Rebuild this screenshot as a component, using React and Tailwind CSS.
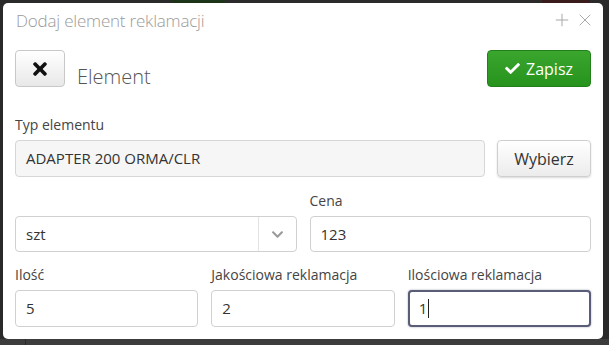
import React from "react";
import { FaCheck, FaTimes, FaChevronDown } from "react-icons/fa";
import { Plus, X } from "lucide-react";

const font = { fontFamily: '"Open Sans", "Noto Sans", sans-serif' };

function Label({ children }) {
  return <div className="text-[14px] leading-[20px] text-[#444] h-[20px]">{children}</div>;
}

export default function App() {
  return (
    <div style={font} className="w-[609px] h-[345px] bg-[#2a2a2a] flex flex-col overflow-hidden">
      <div className="h-[3px] flex shrink-0">
        <div className="w-[171px]" />
        <div className="w-[54px] bg-[#1d3318]" />
        <div className="w-[317px]" />
        <div className="w-[48px] bg-[#3a1b1b]" />
      </div>
      <div className="flex flex-1">
        <div className="w-[3px] shrink-0" />
        <div className="w-[600px] h-[336px] bg-white rounded-[5px] flex flex-col px-[12px]">
          <div className="h-[42px] flex items-start justify-between pl-[1px] pt-[6px]">
            <div className="text-[17px] leading-[24px] font-light text-[#9a9a9a] tracking-[-0.2px]">Dodaj element reklamacji</div>
            <div className="flex items-center gap-[3px] text-[#a8a8a8] h-[24px] mt-[-1px] mr-[-4px]">
              <Plus className="w-[20px] h-[20px]" strokeWidth={1.2} />
              <X className="w-[20px] h-[20px]" strokeWidth={1.2} />
            </div>
          </div>
          <div className="h-[40px] mt-[5px] flex items-start justify-between">
            <div className="flex items-end">
              <button className="w-[50px] h-[37px] rounded-[4px] border border-[#c8c8c8] bg-gradient-to-b from-white to-[#e8e8e8] flex items-center justify-center text-[#111]">
                <FaTimes className="w-[20px] h-[20px]" />
              </button>
              <div className="ml-[12px] text-[20px] font-light text-[#555] leading-none">Element</div>
            </div>
            <button className="w-[104px] h-[37px] rounded-[4px] border border-[#22801a] bg-gradient-to-b from-[#3aa62e] to-[#26931c] flex items-center justify-center gap-[6px] text-white text-[16px]">
              <FaCheck className="w-[15px] h-[15px]" />
              <span>Zapisz</span>
            </button>
          </div>
          <div className="mt-[25px]">
            <Label>Typ elementu</Label>
          </div>
          <div className="mt-[5px] flex gap-[12px]">
            <div className="flex-1 h-[37px] rounded-[4px] border border-[#d6d6d6] bg-[#f6f6f6] flex items-center px-[10px] text-[15px] text-[#333]">
              ADAPTER 200 ORMA/CLR
            </div>
            <button className="w-[94px] h-[37px] rounded-[4px] border border-[#cfcfcf] bg-gradient-to-b from-white to-[#ececec] shadow-[0_1px_2px_rgba(0,0,0,0.15)] text-[16px] text-[#333]">
              Wybierz
            </button>
          </div>
          <div className="mt-[14px] grid grid-cols-2 gap-x-[13px]">
            <div className="flex flex-col">
              <div className="h-[20px]" />
              <div className="mt-[5px] h-[36px] rounded-[4px] border border-[#d0d0d0] bg-white flex items-center text-[15px] text-[#333]">
                <div className="flex-1 px-[10px]">szt</div>
                <div className="w-[38px] h-full border-l border-[#e2e2e2] flex items-center justify-center text-[#9a9a9a]">
                  <FaChevronDown className="w-[13px] h-[13px]" />
                </div>
              </div>
            </div>
            <div className="flex flex-col">
              <Label>Cena</Label>
              <div className="mt-[5px] h-[36px] rounded-[4px] border border-[#d0d0d0] bg-white flex items-center px-[10px] text-[15px] text-[#333]">
                123
              </div>
            </div>
          </div>
          <div className="mt-[13px] grid grid-cols-3 gap-x-[13px]">
            <div className="flex flex-col">
              <Label>Ilość</Label>
              <div className="mt-[5px] h-[37px] rounded-[4px] border border-[#d0d0d0] bg-white flex items-center px-[10px] text-[15px] text-[#333]">
                5
              </div>
            </div>
            <div className="flex flex-col">
              <Label>Jakościowa reklamacja</Label>
              <div className="mt-[5px] h-[37px] rounded-[4px] border border-[#d0d0d0] bg-white flex items-center px-[10px] text-[15px] text-[#333]">
                2
              </div>
            </div>
            <div className="flex flex-col">
              <Label>Ilościowa reklamacja</Label>
              <div className="mt-[5px] h-[37px] rounded-[4px] border-2 border-[#5a5d78] shadow-[0_0_2px_rgba(90,93,120,0.6)] bg-white flex items-center px-[9px] text-[15px] text-[#333]">
                1<span className="w-[1px] h-[19px] bg-[#222] ml-[1px]" />
              </div>
            </div>
          </div>
        </div>
        <div className="flex-1" />
      </div>
      <div className="h-[6px] shrink-0 bg-[#3c3c3c] flex">
        <div className="w-[25px]" />
        <div className="w-[1px] bg-[#2a2a2a]" />
      </div>
    </div>
  );
}
